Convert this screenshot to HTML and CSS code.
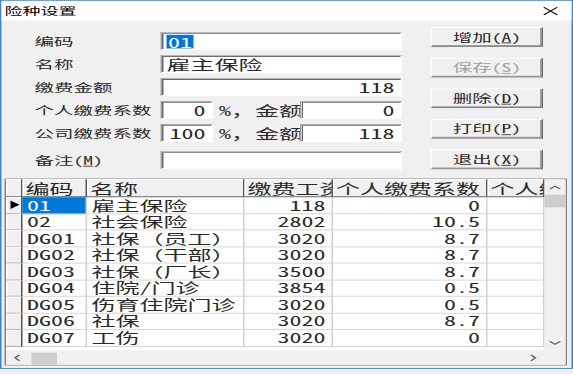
FILE: index.html
```html
<!DOCTYPE html>
<html lang="zh-CN">
<head>
    <meta charset="UTF-8">
    <meta name="viewport" content="width=device-width, initial-scale=1.0">
    <title>险种设置</title>
    <link rel="stylesheet" href="styles.css">
</head>
<body>
<div class="screen">
<div class="win">
    <div class="titlebar">
        <span class="title">险种设置</span>
        <svg class="close" width="10" height="10" viewBox="0 0 10 10"><path d="M0.5 0.5L9.5 9.5M9.5 0.5L0.5 9.5" stroke="#000" stroke-width="1" fill="none"/></svg>
    </div>

    <div class="top">
        <div class="form">
            <div class="row"><span class="lbl">编码</span><div class="edit wide"><span class="sel">01</span></div></div>
            <div class="row"><span class="lbl">名称</span><div class="edit wide">雇主保险</div></div>
            <div class="row"><span class="lbl">缴费金额</span><div class="edit wide num">118</div></div>
            <div class="row"><span class="lbl">个人缴费系数</span><div class="edit small num">0</div><span class="unit">%，金额</span><div class="edit amt num">0</div></div>
            <div class="row"><span class="lbl">公司缴费系数</span><div class="edit small num">100</div><span class="unit">%，金额</span><div class="edit amt num">118</div></div>
            <div class="row last"><span class="lbl">备注(<u>M</u>)</span><div class="edit wide"></div></div>
        </div>
        <div class="btns">
            <button class="btn">增加(<u>A</u>)</button>
            <button class="btn off">保存(<u>S</u>)</button>
            <button class="btn">删除(<u>D</u>)</button>
            <button class="btn">打印(<u>P</u>)</button>
            <button class="btn">退出(<u>X</u>)</button>
        </div>
    </div>

    <div class="grid">
        <div class="grid-body">
            <div class="cells">
                <div class="hd"></div><div class="hd">编码</div><div class="hd">名称</div><div class="hd">缴费工资</div><div class="hd">个人缴费系数</div><div class="hd">个人缴费金额</div>

                <div class="ind"><span class="arrow"></span></div><div class="c cur">01</div><div class="c">雇主保险</div><div class="c n">118</div><div class="c n">0</div><div class="c"></div>
                <div class="ind"></div><div class="c">02</div><div class="c">社会保险</div><div class="c n">2802</div><div class="c n">10.5</div><div class="c"></div>
                <div class="ind"></div><div class="c">DG01</div><div class="c">社保（员工）</div><div class="c n">3020</div><div class="c n">8.7</div><div class="c"></div>
                <div class="ind"></div><div class="c">DG02</div><div class="c">社保（干部）</div><div class="c n">3020</div><div class="c n">8.7</div><div class="c"></div>
                <div class="ind"></div><div class="c">DG03</div><div class="c">社保（厂长）</div><div class="c n">3500</div><div class="c n">8.7</div><div class="c"></div>
                <div class="ind"></div><div class="c">DG04</div><div class="c">住院/门诊</div><div class="c n">3854</div><div class="c n">0.5</div><div class="c"></div>
                <div class="ind"></div><div class="c">DG05</div><div class="c">伤育住院门诊</div><div class="c n">3020</div><div class="c n">0.5</div><div class="c"></div>
                <div class="ind"></div><div class="c">DG06</div><div class="c">社保</div><div class="c n">3020</div><div class="c n">8.7</div><div class="c"></div>
                <div class="ind"></div><div class="c">DG07</div><div class="c">工伤</div><div class="c n">3020</div><div class="c n">0</div><div class="c"></div>
            </div>
            <div class="vscroll">
                <div class="sb-btn"><svg width="8" height="5" viewBox="0 0 8 5"><path d="M0.5 4.5L4 1L7.5 4.5" stroke="#606060" stroke-width="1.2" fill="none"/></svg></div>
                <div class="vthumb"></div>
                <div class="sb-fill"></div>
                <div class="sb-btn"><svg width="8" height="5" viewBox="0 0 8 5"><path d="M0.5 0.5L4 4L7.5 0.5" stroke="#606060" stroke-width="1.2" fill="none"/></svg></div>
            </div>
        </div>
        <div class="hbar">
            <div class="hscroll">
                <div class="sb-side"><svg width="5" height="8" viewBox="0 0 5 8"><path d="M4 0.5L1 4L4 7.5" stroke="#606060" stroke-width="1.2" fill="none"/></svg></div>
                <div class="hthumb"></div>
                <div class="sb-fill"></div>
                <div class="sb-side"><svg width="5" height="8" viewBox="0 0 5 8"><path d="M1 0.5L4 4L1 7.5" stroke="#606060" stroke-width="1.2" fill="none"/></svg></div>
            </div>
            <div class="corner"></div>
        </div>
    </div>
</div>
</div>
</body>
</html>
```

FILE: styles.css
```css
html, body{
    margin: 0;
    height: 100%;
    overflow: hidden;
}
body{
    background: #f0f0f0;
    font-family: "Noto Sans Mono CJK SC", "Noto Sans CJK SC", "Liberation Mono", monospace;
    color: #2a2a2a;
}
.screen{
    width: 573px;
    height: 374px;
    overflow: hidden;
}
/* dialog is laid out at its native size, then stretched like the capture */
.win{
    width: 382px;
    height: 434px;
    box-sizing: border-box;
    border: 1px solid #3b82d1;
    background: #f0f0f0;
    display: flex;
    flex-direction: column;
    transform-origin: 0 0;
    transform: scale(1.5, 0.85);
}
.titlebar{
    height: 23px;
    background: #fff;
    display: flex;
    align-items: center;
    justify-content: space-between;
    padding: 0 9px 0 2px;
}
.title{
    font-family: "Noto Sans CJK SC", sans-serif;
    font-size: 12px;
    line-height: 14px;
    color: #000;
}
.top{
    display: flex;
    align-items: flex-start;
    gap: 19px;
    padding: 8px 0 0 22px;
}
.form{
    display: flex;
    flex-direction: column;
    gap: 6px;
    padding-top: 6px;
}
.row{
    display: flex;
    align-items: center;
    height: 21px;
}
.row.last{
    margin-top: 5px;
}
.lbl{
    width: 84px;
    font-size: 13px;
    line-height: 15px;
}
.edit{
    height: 21px;
    box-sizing: border-box;
    background: #fff;
    border: 1px solid;
    border-color: #a0a0a0 #fff #fff #a0a0a0;
    box-shadow: inset 1px 1px #696969;
    font-size: 16px;
    line-height: 17px;
    display: flex;
    align-items: center;
    padding: 0 3px 0 3px;
    white-space: nowrap;
}
.edit.num{
    justify-content: flex-end;
    padding-right: 4px;
}
.wide{
    width: 161px;
}
.small{
    width: 35px;
}
.amt{
    width: 68px;
    margin-left: -2px;
}
.unit{
    font-size: 16px;
    line-height: 17px;
    margin-left: 4px;
    white-space: nowrap;
}
.sel{
    background: #0078d7;
    color: #fff;
    line-height: 16px;
    padding: 0 1px;
}
.btns{
    display: flex;
    flex-direction: column;
    gap: 13px;
}
.btn{
    width: 75px;
    height: 23px;
    box-sizing: border-box;
    background: #f0f0f0;
    border: 1px solid;
    border-color: #fff #696969 #696969 #fff;
    box-shadow: inset -1px -1px #a0a0a0;
    font-family: inherit;
    font-size: 13px;
    line-height: 15px;
    padding: 0;
    color: #2a2a2a;
}
.btn.off{
    color: #a0a0a0;
}
.grid{
    margin: 11px 3px 0 2px;
    height: 220px;
    box-sizing: border-box;
    border: 1px solid #828282;
    display: flex;
    flex-direction: column;
    background: #fff;
}
.grid-body{
    display: flex;
    height: 201px;
}
.cells{
    width: 359px;
    display: grid;
    grid-template-columns: 11px 43px 105px 59px 103px 38px;
    grid-template-rows: 21px;
    grid-auto-rows: 19.5px;
    align-content: start;
    font-size: 16px;
    line-height: 17px;
}
.cells > div{
    box-sizing: border-box;
    overflow: hidden;
    white-space: nowrap;
    display: flex;
    align-items: center;
}
.hd{
    background: #f0f0f0;
    border-right: 1px solid #555;
    border-bottom: 1px solid #555;
    box-shadow: inset 1px 1px #fff;
    padding-left: 2px;
}
.ind{
    background: #f0f0f0;
    border-right: 1px solid #555;
    border-bottom: 1px solid #a0a0a0;
    box-shadow: inset 1px 1px #fff;
    justify-content: center;
}
.arrow{
    width: 0;
    height: 0;
    border-left: 6px solid #000;
    border-top: 5px solid transparent;
    border-bottom: 5px solid transparent;
    margin-left: 1px;
}
.c{
    border-right: 1px solid #d0d0d0;
    border-bottom: 1px solid #d0d0d0;
    padding-left: 3px;
}
.c.n{
    justify-content: flex-end;
    padding-right: 4px;
}
.c.cur{
    background: #0078d7;
    color: #fff;
}
.vscroll{
    width: 14px;
    background: #f0f0f0;
    display: flex;
    flex-direction: column;
}
.sb-btn{
    height: 18px;
    display: flex;
    align-items: center;
    justify-content: center;
}
.sb-fill{
    flex: 1;
}
.vthumb{
    height: 15px;
    background: #cdcdcd;
}
.hbar{
    display: flex;
    height: 17px;
}
.hscroll{
    width: 359px;
    background: #f0f0f0;
    display: flex;
}
.sb-side{
    width: 15px;
    display: flex;
    align-items: center;
    justify-content: center;
}
.hthumb{
    width: 17px;
    height: 14px;
    align-self: flex-end;
    margin-left: 2px;
    background: #cdcdcd;
}
.corner{
    width: 14px;
    background: #f0f0f0;
}
```
